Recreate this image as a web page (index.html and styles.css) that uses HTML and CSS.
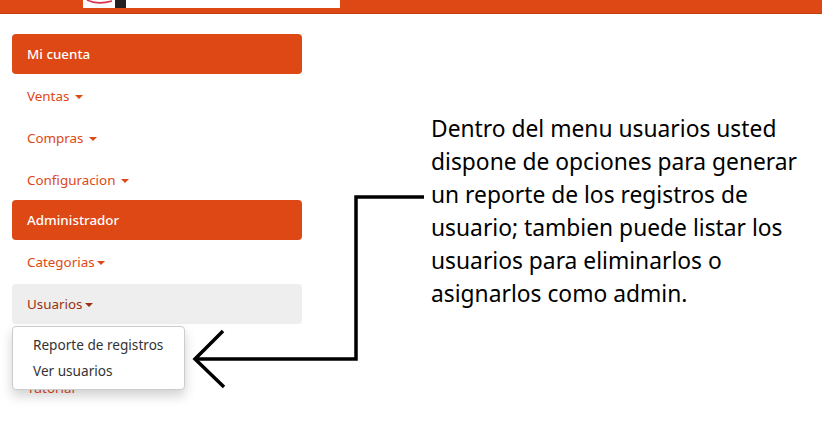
FILE: index.html
```html
<!DOCTYPE html>
<html lang="en">
<head>
  <meta charset="UTF-8">
  <title>Menu usuarios</title>
  <link rel="stylesheet" href="styles.css">
</head>
<body>

<header class="topbar">
  <div class="banner">
    <svg class="banner-art" width="48" height="8" viewBox="0 0 48 8">
      <path d="M4 0 C10 3 20 3.5 29 1" fill="none" stroke="#d9304a" stroke-width="1.6"/>
      <rect x="32" y="0" width="11" height="8" fill="#231f20"/>
    </svg>
  </div>
</header>

<main class="page">
  <nav class="side">
    <a class="pill active">Mi cuenta</a>
    <a class="pill">Ventas <span class="caret"></span></a>
    <a class="pill">Compras <span class="caret"></span></a>
    <a class="pill">Configuracion <span class="caret"></span></a>
    <a class="pill active admin">Administrador</a>
    <a class="pill">Categorias<span class="caret"></span></a>
    <a class="pill open">Usuarios<span class="caret"></span></a>
    <a class="pill tutorial">Tutorial</a>

    <ul class="dropdown">
      <li>Reporte de registros</li>
      <li>Ver usuarios</li>
    </ul>
  </nav>

  <p class="note">Dentro del menu usuarios usted dispone de opciones para generar un reporte de los registros de usuario; tambien puede listar los usuarios para eliminarlos o asignarlos como admin.</p>

  <svg class="arrow" width="240" height="210" viewBox="0 0 240 210">
    <path d="M237 5 H169 V167 H8" fill="none" stroke="#000" stroke-width="3.5"/>
    <path d="M36 139 L8 167 L37 195" fill="none" stroke="#000" stroke-width="3.5"/>
  </svg>
</main>

</body>
</html>
```

FILE: styles.css
```css
body {
  font-family: 'Noto Sans', sans-serif;
  background: #fff;
  margin: 0;
  padding: 0;
  height: 431px;
  overflow: hidden;
}

.topbar {
  height: 13px;
  background: #dd4814;
  border-bottom: 1px solid #bf3e11;
  display: flex;
  padding-left: 83px;
}

.banner {
  width: 257px;
  height: 8px;
  background: #fff;
}

.banner-art {
  display: block;
}

.page {
  position: relative;
  display: flex;
  padding: 20px 0 0 12px;
}

.side {
  position: relative;
  width: 290px;
  flex-shrink: 0;
  display: flex;
  flex-direction: column;
  gap: 2px;
}

.pill {
  height: 40px;
  line-height: 40px;
  padding: 0 15px;
  border-radius: 4px;
  font-size: 13.4px;
  color: #dd4814;
}

.active {
  background: #dd4814;
  color: #fff;
  font-weight: 500;
}

.admin {
  margin-top: -2px;
}

.open {
  background: #eee;
  color: #97310e;
}

.tutorial {
  margin-top: 42px;
}

.caret {
  display: inline-block;
  width: 0;
  height: 0;
  margin-left: 2px;
  vertical-align: middle;
  border-top: 4px solid;
  border-left: 4px solid transparent;
  border-right: 4px solid transparent;
}

.dropdown {
  position: absolute;
  top: 292px;
  left: 0;
  width: 171px;
  margin: 0;
  padding: 5px 0;
  list-style: none;
  background: #fff;
  border: 1px solid #ccc;
  border-radius: 4px;
  box-shadow: 0 6px 12px rgba(0, 0, 0, 0.18);
  font-size: 13.6px;
  color: #333;
}

.dropdown li {
  padding: 0 20px;
  height: 26px;
  line-height: 26px;
}

.note {
  margin: 78px 0 0 129px;
  width: 385px;
  font-size: 22.8px;
  line-height: 33px;
  color: #000;
}

.arrow {
  position: absolute;
  left: 187px;
  top: 178px;
}
```
